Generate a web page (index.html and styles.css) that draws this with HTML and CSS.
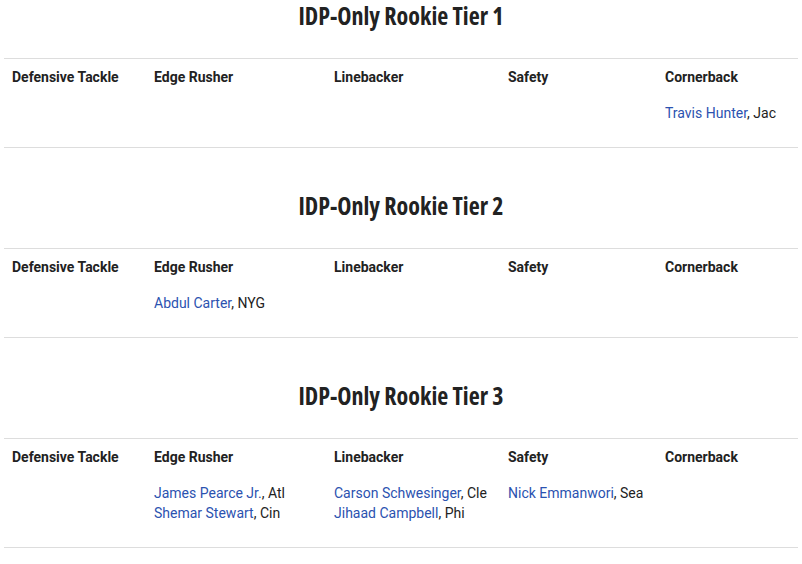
FILE: index.html
```html
<!DOCTYPE html>
<html>
<head>
<meta charset="utf-8">
<link rel="stylesheet" href="styles.css">
</head>
<body>
<section class="tier">
  <h2 class="tier-title">IDP-Only Rookie Tier 1</h2>
  <table class="tier-table">
    <colgroup><col class="c1"><col class="c2"><col class="c3"><col class="c4"><col class="c5"></colgroup>
    <thead><tr><th>Defensive Tackle</th><th>Edge Rusher</th><th>Linebacker</th><th>Safety</th><th>Cornerback</th></tr></thead>
    <tbody><tr><td></td><td></td><td></td><td></td><td><a href="#">Travis Hunter</a>, Jac</td></tr></tbody>
  </table>
</section>
<section class="tier">
  <h2 class="tier-title">IDP-Only Rookie Tier 2</h2>
  <table class="tier-table">
    <colgroup><col class="c1"><col class="c2"><col class="c3"><col class="c4"><col class="c5"></colgroup>
    <thead><tr><th>Defensive Tackle</th><th>Edge Rusher</th><th>Linebacker</th><th>Safety</th><th>Cornerback</th></tr></thead>
    <tbody><tr><td></td><td><a href="#">Abdul Carter</a>, NYG</td><td></td><td></td><td></td></tr></tbody>
  </table>
</section>
<section class="tier">
  <h2 class="tier-title">IDP-Only Rookie Tier 3</h2>
  <table class="tier-table">
    <colgroup><col class="c1"><col class="c2"><col class="c3"><col class="c4"><col class="c5"></colgroup>
    <thead><tr><th>Defensive Tackle</th><th>Edge Rusher</th><th>Linebacker</th><th>Safety</th><th>Cornerback</th></tr></thead>
    <tbody><tr><td></td><td><a href="#">James Pearce Jr.</a>, Atl<br><a href="#">Shemar Stewart</a>, Cin</td><td><a href="#">Carson Schwesinger</a>, Cle<br><a href="#">Jihaad Campbell</a>, Phi</td><td><a href="#">Nick Emmanwori</a>, Sea</td><td></td></tr></tbody>
  </table>
</section>
</body>
</html>
```
FILE: styles.css
```css
html, body {
  margin: 0;
  background: #fff;
}
body {
  padding: 1px 4px 0;
  font-family: Roboto, "Liberation Sans", sans-serif;
  font-size: 14px;
  color: #222;
}
.tier {
  margin: 0 0 43px;
}
.tier-title {
  margin: 0 0 27px;
  height: 30px;
  line-height: 30px;
  text-align: center;
  font-family: "Open Sans", "Roboto Condensed", sans-serif;
  font-stretch: 75%;
  font-weight: 700;
  font-size: 24px;
  color: #222;
}
.tier-table {
  width: 794px;
  border-collapse: collapse;
  table-layout: fixed;
  border-top: 1px solid #ddd;
  border-bottom: 1px solid #ddd;
}
.c1 { width: 142px; }
.c2 { width: 180px; }
.c3 { width: 174px; }
.c4 { width: 157px; }
.c5 { width: 141px; }
.tier-table th {
  text-align: left;
  font-weight: 700;
  padding: 8px 8px;
  line-height: 20px;
  vertical-align: top;
}
.tier-table td {
  padding: 8px 8px 24px;
  line-height: 20px;
  height: 20px;
  vertical-align: top;
}
.tier-table a {
  color: #2b52b0;
  text-decoration: none;
}
```
